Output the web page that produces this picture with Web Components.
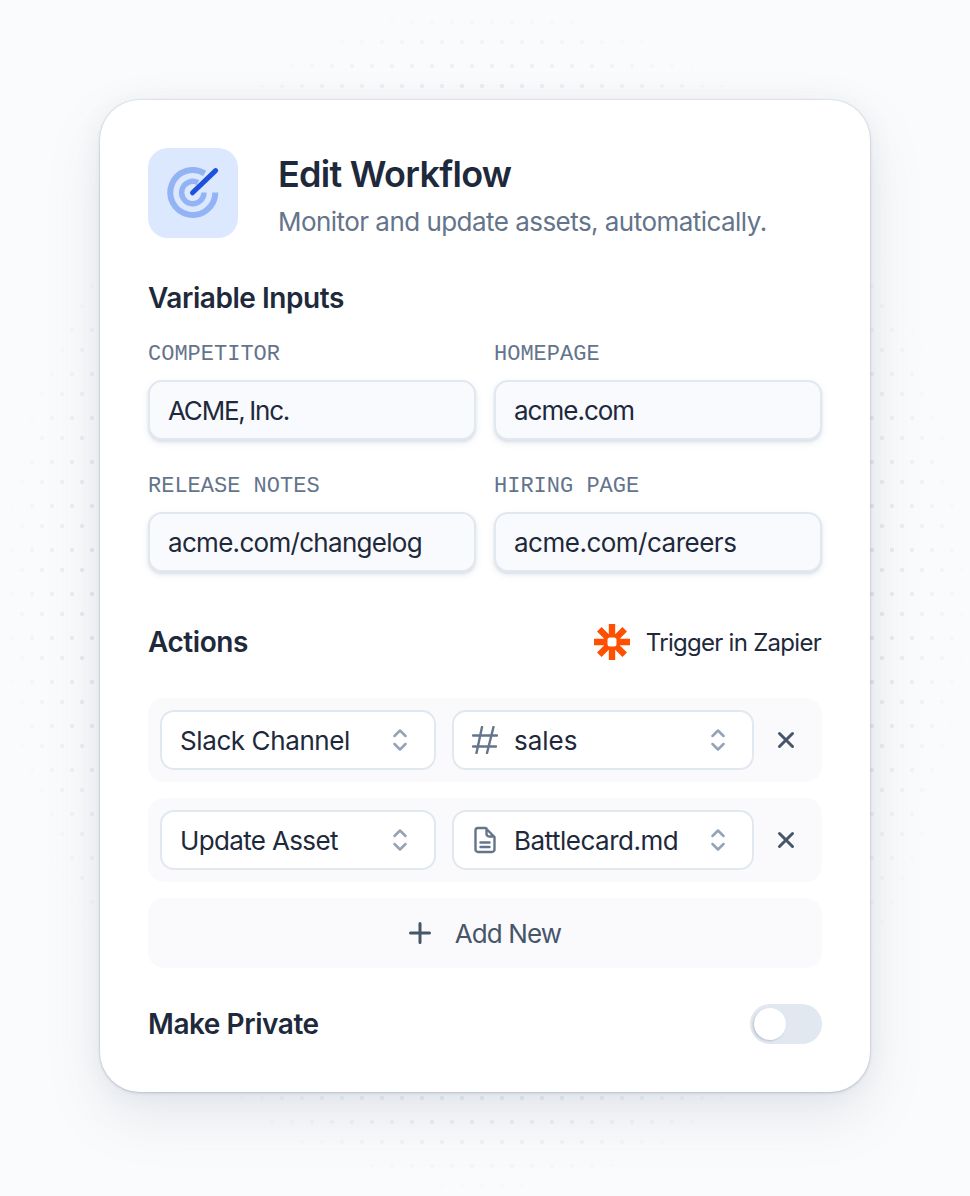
<!DOCTYPE html>
<html lang="en">
<head>
<meta charset="utf-8">
<title>Edit Workflow</title>
<style>
  html, body { margin: 0; background: #fafbfc; }
  body { font-family: Inter, "Liberation Sans", sans-serif; color: #1e293b; }
</style>
</head>
<body>
<page-backdrop>
  <workflow-card>
    <target-badge slot="badge"></target-badge>
    <span slot="title">Edit Workflow</span>
    <span slot="subtitle">Monitor and update assets, automatically.</span>

    <section-title slot="inputs-title">Variable Inputs</section-title>
    <text-field slot="inputs" label="Competitor" value="ACME, Inc." style="--track:-1.2px;--word:-1.5px"></text-field>
    <text-field slot="inputs" label="Homepage" value="acme.com" style="--track:-1px"></text-field>
    <text-field slot="inputs" label="Release Notes" value="acme.com/changelog" style="--track:-.7px"></text-field>
    <text-field slot="inputs" label="Hiring Page" value="acme.com/careers"></text-field>

    <section-title slot="actions-title">Actions</section-title>
    <zapier-link slot="actions-side">Trigger in Zapier</zapier-link>

    <action-row slot="actions">
      <select-box style="width:276px;--track:-.4px">Slack Channel</select-box>
      <select-box style="width:302px;--track:0" icon="hash">sales</select-box>
    </action-row>
    <action-row slot="actions">
      <select-box style="width:276px;--track:-.65px">Update Asset</select-box>
      <select-box style="width:302px;--track:-.5px" icon="doc">Battlecard.md</select-box>
    </action-row>
    <add-button slot="actions">Add New</add-button>

    <section-title slot="private-title">Make Private</section-title>
    <toggle-switch slot="private-side"></toggle-switch>
  </workflow-card>
</page-backdrop>

<script>
class PageBackdrop extends HTMLElement {
  constructor() {
    super();
    this.attachShadow({ mode: "open" });
    this.shadowRoot.innerHTML = `
    <style>
      :host { display: block; position: relative; height: 1196px; overflow: hidden; background: #fafbfc; }
      .dots {
        position: absolute;
        inset: 0;
        background-image:
          radial-gradient(circle at 12px 22px, #cdd3de 1.9px, transparent 2.4px),
          radial-gradient(circle at 2px 42px, #cdd3de 1.9px, transparent 2.4px);
        background-size: 20px 44px;
        -webkit-mask-image: radial-gradient(ellipse 485px 598px at 485px 598px, #000 60%, transparent 100%);
        mask-image: radial-gradient(ellipse 485px 598px at 485px 598px, #000 60%, transparent 100%);
      }
      .content { position: relative; padding: 100px; }
    </style>
    <div class="dots"></div>
    <div class="content"><slot></slot></div>`;
  }
}

class WorkflowCard extends HTMLElement {
  constructor() {
    super();
    this.attachShadow({ mode: "open" });
    this.shadowRoot.innerHTML = `
    <style>
      :host {
        display: block;
        box-sizing: border-box;
        width: 770px;
        height: 992px;
        padding: 48px;
        background: #fff;
        border-radius: 40px;
        box-shadow: 0 0 0 1px rgba(148,163,184,.14), 0 1px 3px rgba(100,116,139,.3), 0 0 24px rgba(100,116,139,.07), 0 24px 56px rgba(100,116,139,.14);
      }
      header { display: flex; align-items: flex-start; gap: 40px; }
      .heading { padding-top: 4px; }
      .title { font-size: 36px; line-height: 44px; font-weight: 600; letter-spacing: -.72px; color: #1e293b; }
      .subtitle { font-size: 26px; line-height: 32px; margin-top: 10px; letter-spacing: -.54px; color: #64748b; }
      .block-a { margin-top: 40px; }
      .grid { display: grid; grid-template-columns: 328px 328px; column-gap: 18px; row-gap: 30px; margin-top: 20px; }
      .bar { display: flex; align-items: center; justify-content: space-between; height: 40px; }
      .block-b { margin-top: 50px; }
      .rows { display: flex; flex-direction: column; gap: 16px; margin-top: 36px; }
      .block-c { margin-top: 36px; }
    </style>
    <header>
      <slot name="badge"></slot>
      <div class="heading">
        <div class="title"><slot name="title"></slot></div>
        <div class="subtitle"><slot name="subtitle"></slot></div>
      </div>
    </header>
    <div class="block-a">
      <div class="bar"><slot name="inputs-title"></slot></div>
      <div class="grid"><slot name="inputs"></slot></div>
    </div>
    <div class="block-b">
      <div class="bar"><slot name="actions-title"></slot><slot name="actions-side"></slot></div>
      <div class="rows"><slot name="actions"></slot></div>
    </div>
    <div class="block-c">
      <div class="bar"><slot name="private-title"></slot><slot name="private-side"></slot></div>
    </div>`;
  }
}

class TargetBadge extends HTMLElement {
  constructor() {
    super();
    this.attachShadow({ mode: "open" });
    this.shadowRoot.innerHTML = `
    <style>
      :host { display: block; width: 90px; height: 90px; flex: none; background: #dbe8fe; border-radius: 20px; }
      svg { display: block; }
    </style>
    <svg width="90" height="90" viewBox="0 0 90 90" fill="none">
      <path d="M67.300 44.500A22.500 22.500 0 1 1 56.700 25.400" stroke="#93b3f4" stroke-width="6"/>
      <path d="M56 44.500A11.200 11.200 0 1 1 50 34.600" stroke="#93b3f4" stroke-width="5.400"/>
      <path d="M44.500 44.800L67.600 22.600" stroke="#1f50db" stroke-width="5" stroke-linecap="round"/>
    </svg>`;
  }
}

class SectionTitle extends HTMLElement {
  constructor() {
    super();
    this.attachShadow({ mode: "open" });
    this.shadowRoot.innerHTML = `
    <style>
      :host { display: block; font-size: 28px; line-height: 40px; font-weight: 600; letter-spacing: -.45px; color: #1e293b; }
    </style>
    <slot></slot>`;
  }
}

class TextField extends HTMLElement {
  constructor() {
    super();
    this.attachShadow({ mode: "open" });
    this.shadowRoot.innerHTML = `
    <style>
      :host { display: block; }
      .label {
        font-family: "Liberation Mono", "DejaVu Sans Mono", monospace;
        font-size: 22px;
        line-height: 34px;
        text-transform: uppercase;
        color: #64748b;
        margin-bottom: 8px;
      }
      .box {
        box-sizing: border-box;
        height: 60px;
        padding: 0 18px;
        display: flex;
        align-items: center;
        font-size: 26px;
        font-weight: 420;
        letter-spacing: var(--track, -.5px);
        word-spacing: var(--word, 0);
        color: #1e293b;
        background: #f9fafd;
        border: 2px solid #e2e8f0;
        border-radius: 14px;
        box-shadow: 0 2px 2px #dfe3eb, 0 3px 6px rgba(148,163,184,.22);
      }
    </style>
    <div class="label"></div>
    <div class="box"></div>`;
    this.shadowRoot.querySelector(".label").textContent = this.getAttribute("label");
    this.shadowRoot.querySelector(".box").textContent = this.getAttribute("value");
  }
}

class ZapierLink extends HTMLElement {
  constructor() {
    super();
    this.attachShadow({ mode: "open" });
    this.shadowRoot.innerHTML = `
    <style>
      :host { display: flex; align-items: center; gap: 16px; padding-right: 1px; font-size: 24px; font-weight: 420; letter-spacing: -.72px; color: #1e293b; }
      svg { display: block; }
    </style>
    <svg width="36" height="36" viewBox="0 0 36 36" fill="none" stroke="#ff4f00" stroke-width="6.400">
      <path d="M18 0V36M0 18H36M5.300 5.300L30.700 30.700M30.700 5.300L5.300 30.700"/>
      <rect x="13.500" y="13.500" width="9" height="9" rx="2.500" fill="#fff" stroke="none"/>
    </svg>
    <slot></slot>`;
  }
}

class ActionRow extends HTMLElement {
  constructor() {
    super();
    this.attachShadow({ mode: "open" });
    this.shadowRoot.innerHTML = `
    <style>
      :host {
        display: flex;
        align-items: center;
        gap: 16px;
        height: 84px;
        box-sizing: border-box;
        padding: 0 12px;
        background: #fafafd;
        border-radius: 16px;
      }
      svg { display: block; }
    </style>
    <slot></slot>
    <svg width="32" height="32" viewBox="0 0 32 32" fill="none" stroke="#475569" stroke-width="3" stroke-linecap="round">
      <path d="M9.500 9.500L22.500 22.500M22.500 9.500L9.500 22.500"/>
    </svg>`;
  }
}

const LEAD_ICONS = {
  hash: `<svg width="26" height="28" viewBox="0 0 26 28" fill="none" stroke="#64748b" stroke-width="2.400" stroke-linecap="round"><path d="M1 9.500H25M1 20.500H24M10 1L4.500 27M21.500 1L15 27"/></svg>`,
  doc: `<svg width="26" height="28" viewBox="0 0 26 28" fill="none" stroke="#64748b" stroke-width="2.400" stroke-linecap="round" stroke-linejoin="round"><path d="M13.500 2H6a2.500 2.500 0 0 0-2.500 2.500v19A2.500 2.500 0 0 0 6 26h14a2.500 2.500 0 0 0 2.500-2.500V11zM14.500 2.500V8a2.500 2.500 0 0 0 2.500 2.500h5M8.500 16.500h9M8.500 21h9"/></svg>`
};

class SelectBox extends HTMLElement {
  constructor() {
    super();
    this.attachShadow({ mode: "open" });
    const icon = LEAD_ICONS[this.getAttribute("icon")];
    this.shadowRoot.innerHTML = `
    <style>
      :host {
        display: flex;
        align-items: center;
        box-sizing: border-box;
        height: 60px;
        padding: 0 27px 0 18px;
        background: #fff;
        border: 2px solid #e2e8f0;
        border-radius: 14px;
        font-size: 26px;
        font-weight: 420;
        letter-spacing: var(--track, 0);
        color: #1e293b;
      }
      .lead { flex: none; margin-right: 16px; }
      .lead svg, .chev { display: block; }
      .text { flex: 1; }
      .chev { flex: none; }
    </style>
    ${icon ? `<span class="lead">${icon}</span>` : ""}
    <span class="text"><slot></slot></span>
    <svg class="chev" width="14" height="24" viewBox="0 0 14 24" fill="none" stroke="#94a3b8" stroke-width="2.500" stroke-linecap="round" stroke-linejoin="round">
      <path d="M1.500 8L7 2.500L12.500 8M1.500 16L7 21.500L12.500 16"/>
    </svg>`;
  }
}

class AddButton extends HTMLElement {
  constructor() {
    super();
    this.attachShadow({ mode: "open" });
    this.shadowRoot.innerHTML = `
    <style>
      :host {
        display: flex;
        align-items: center;
        justify-content: center;
        gap: 24px;
        height: 70px;
        background: #fafafd;
        border-radius: 16px;
        font-size: 26px;
        font-weight: 420;
        letter-spacing: -.9px;
        color: #475569;
      }
      svg { display: block; }
    </style>
    <svg width="22" height="22" viewBox="0 0 22 22" fill="none" stroke="#475569" stroke-width="3" stroke-linecap="round">
      <path d="M11 1.500V20.500M1.500 11H20.500"/>
    </svg>
    <slot></slot>`;
  }
}

class ToggleSwitch extends HTMLElement {
  constructor() {
    super();
    this.attachShadow({ mode: "open" });
    this.shadowRoot.innerHTML = `
    <style>
      :host { display: flex; align-items: center; box-sizing: border-box; width: 72px; height: 40px; padding: 4px; background: #e2e8f0; border-radius: 20px; }
      .knob { width: 32px; height: 32px; border-radius: 50%; background: #fff; box-shadow: -1px 1px 2px rgba(100,116,139,.35); }
    </style>
    <div class="knob"></div>`;
  }
}

customElements.define("page-backdrop", PageBackdrop);
customElements.define("workflow-card", WorkflowCard);
customElements.define("target-badge", TargetBadge);
customElements.define("section-title", SectionTitle);
customElements.define("text-field", TextField);
customElements.define("zapier-link", ZapierLink);
customElements.define("action-row", ActionRow);
customElements.define("select-box", SelectBox);
customElements.define("add-button", AddButton);
customElements.define("toggle-switch", ToggleSwitch);
</script>
</body>
</html>
